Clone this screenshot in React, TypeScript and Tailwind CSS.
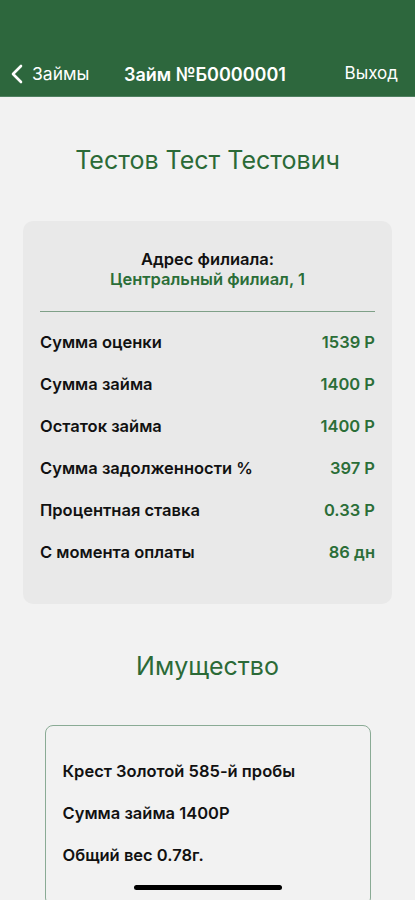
import React from "react";

const rows = [
  { label: "Сумма оценки", value: "1539 Р" },
  { label: "Сумма займа", value: "1400 Р" },
  { label: "Остаток займа", value: "1400 Р" },
  { label: "Сумма задолженности %", value: "397 Р" },
  { label: "Процентная ставка", value: "0.33 Р" },
  { label: "С момента оплаты", value: "86 дн" },
];

const items = ["Крест Золотой 585-й пробы", "Сумма займа 1400Р", "Общий вес 0.78г."];

export default function App() {
  return (
    <div
      className="relative h-[900px] w-full overflow-hidden bg-[#f2f2f2]"
      style={{ fontFamily: 'Inter, "Liberation Sans", Arial, sans-serif' }}
    >
      <header className="h-[97px] border-b border-[#4f8060] bg-[#2d673d] pt-[56px]">
        <div className="relative flex h-[36px] items-center justify-between px-[11px] text-[17px] text-white">
          <button className="flex items-center gap-[9px]">
            <svg width="12" height="20" viewBox="0 0 12 20" fill="none">
              <path d="M10 2 2 10l8 8" stroke="white" strokeWidth="2.6" strokeLinecap="round" strokeLinejoin="round" />
            </svg>
            <span className="text-[17.5px]">Займы</span>
          </button>
          <h1 className="absolute left-[124px] text-[18px] font-semibold">Займ №Б0000001</h1>
          <button className="pr-[6px]">Выход</button>
        </div>
      </header>

      <main className="flex flex-col items-center">
        <h2 className="mt-[45px] text-[25px] text-[#2b6a37]">Тестов Тест Тестович</h2>

        <section className="mt-[41px] w-[369px] rounded-[10px] bg-[#e9e9e9] px-[17px] pb-[41px] pt-[28px]">
          <div className="text-center text-[16.5px] font-semibold leading-[20px]">
            <p className="text-[#111]">Адрес филиала:</p>
            <p className="text-[#2b6e38]">Центральный филиал, 1</p>
          </div>
          <div className="mt-[22px] h-px bg-[#7fa088]" />
          <div className="mt-[21px] flex flex-col gap-[22px]">
            {rows.map((r) => (
              <div key={r.label} className="flex h-[20px] items-center justify-between text-[16.5px] font-semibold">
                <span className="text-[#111]">{r.label}</span>
                <span className="text-[#2b6e38]">{r.value}</span>
              </div>
            ))}
          </div>
        </section>

        <h2 className="mt-[44px] text-[25px] text-[#2b6a37]">Имущество</h2>

        <section className="mt-[40px] w-[326px] rounded-[8px] border border-[#8aab95] px-[17px] pt-[35px] pb-[40px]">
          <div className="flex flex-col gap-[22px]">
            {items.map((t) => (
              <p key={t} className="h-[20px] text-[16.5px] font-semibold leading-[20px] text-[#111]">
                {t}
              </p>
            ))}
          </div>
        </section>
      </main>

      <div className="absolute bottom-[10px] left-1/2 h-[5px] w-[148px] -translate-x-1/2 rounded-full bg-black" />
    </div>
  );
}
